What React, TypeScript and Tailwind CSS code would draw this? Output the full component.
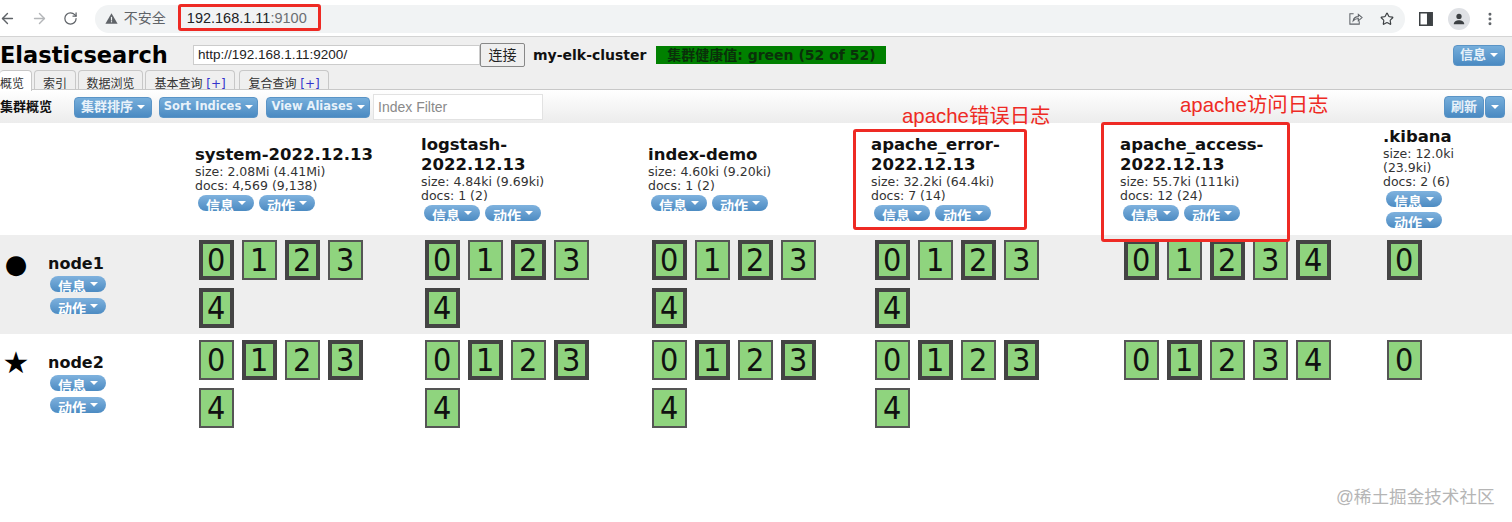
import { ArrowLeft, ArrowRight, RotateCw, Star, MoreVertical } from 'lucide-react';

const indices = [
  { width: 'w-[226px]', shards: 'w-[180px]', name: 'system-2022.12.13', size: 'size: 2.08Mi (4.41Mi)', docs: 'docs: 4,569 (9,138)', pad: 'pt-[22px]' },
  { width: 'w-[227px]', shards: 'w-[180px]', name: 'logstash-2022.12.13', size: 'size: 4.84ki (9.69ki)', docs: 'docs: 1 (2)', pad: 'pt-[12px]' },
  { width: 'w-[223px]', shards: 'w-[180px]', name: 'index-demo', size: 'size: 4.60ki (9.20ki)', docs: 'docs: 1 (2)', pad: 'pt-[22px]' },
  { width: 'w-[249px]', shards: 'w-[180px]', name: 'apache_error-2022.12.13', size: 'size: 32.2ki (64.4ki)', docs: 'docs: 7 (14)', pad: 'pt-[12px]' },
  { width: 'w-[263px]', shards: 'w-[220px]', name: 'apache_access-2022.12.13', size: 'size: 55.7ki (111ki)', docs: 'docs: 12 (24)', pad: 'pt-[12px]' },
  { width: 'w-[129px]', shards: 'w-[120px]', name: '.kibana', size: 'size: 12.0ki (23.9ki)', docs: 'docs: 2 (6)', pad: 'pt-[4px]' },
];

// which shards carry the thick (primary) border, per node and index
const node1Primary = [[0, 2, 4], [0, 2, 4], [0, 2, 4], [0, 2, 4], [0, 2, 4], [0]];
const node2Primary = [[1, 3], [1, 3], [1, 3], [1, 3], [1], []];
const shardCounts = [5, 5, 5, 5, 5, 1];

function Caret() {
  return <span className="ml-1 inline-block border-x-[4px] border-t-[4px] border-x-transparent border-t-white" />;
}

function Pill({ label, stacked }: { label: string; stacked?: boolean }) {
  return (
    <div className={`flex h-4 w-[56px] items-center justify-center overflow-hidden rounded-full bg-gradient-to-b from-[#7fb2de] to-[#4c8bc2] text-[14px] font-bold text-white ${stacked ? 'mb-[6px]' : ''}`}>
      <span className="translate-y-[3px]">{label}</span>
      <Caret />
    </div>
  );
}

function ToolButton({ label, width, text }: { label: string; width: string; text: string }) {
  return (
    <div className={`flex h-[21px] items-center justify-center whitespace-nowrap rounded-sm border border-[#5a94c6] bg-gradient-to-b from-[#76aedb] to-[#4a8ac2] font-bold text-[#e8f2fa] ${text} ${width}`}>
      <span>{label}</span>
      <Caret />
    </div>
  );
}

function Shard({ n, primary }: { n: number; primary: boolean }) {
  return (
    <div className={`mb-2 mr-2 flex h-10 w-[35px] items-center justify-center bg-[#8fd47e] text-[32px] leading-none text-[#111] ${primary ? 'border-4 border-[#444]' : 'border-2 border-[#555]'}`}>
      <span className="scale-x-90">{n}</span>
    </div>
  );
}

function NodeRow({ name, icon, iconSize, primary, bg, shardPad }: { name: string; icon: string; iconSize: string; primary: number[][]; bg: string; shardPad: string }) {
  return (
    <div className={`flex h-[99px] ${bg}`}>
      <div className="flex w-[195px] shrink-0">
        <div className={`flex w-[48px] justify-center pr-[16px] pt-[14px] leading-[30px] text-black ${iconSize}`}>{icon}</div>
        <div className="pt-[20px]">
          <div className="text-[16px] leading-[18px] font-bold text-[#111]">{name}</div>
          <div className="ml-[2px] mt-[3px]">
            <Pill label="信息" stacked />
            <Pill label="动作" />
          </div>
        </div>
      </div>
      {indices.map((ix, i) => (
        <div key={ix.name} className={`${ix.width} shrink-0 pl-1 ${shardPad}`}>
          <div className={`flex flex-wrap ${ix.shards}`}>
            {Array.from({ length: shardCounts[i] }, (_, n) => (
              <Shard key={n} n={n} primary={primary[i].includes(n)} />
            ))}
          </div>
        </div>
      ))}
    </div>
  );
}

export default function App() {
  return (
    <div className="relative h-[522px] w-[1512px] overflow-hidden bg-white font-['DejaVu_Sans','Noto_Sans_CJK_SC',sans-serif] text-[#222]">
      {/* browser chrome */}
      <div className="flex h-[37px] items-center border-b border-[#d4d4d4] bg-white pl-0 pr-[14px] pt-[1px]">
        <ArrowLeft className="ml-[-1px] h-[17px] w-[17px] text-[#5f6368]" />
        <ArrowRight className="ml-[15px] h-[17px] w-[17px] text-[#b4b6b9]" />
        <RotateCw className="ml-[15px] h-[15px] w-[15px] text-[#5f6368]" />
        <div className="ml-[17px] flex h-[28px] w-[1315px] items-center justify-between rounded-full bg-[#f1f3f4] pl-[10px] pr-[11px] font-['Liberation_Sans','Noto_Sans_CJK_SC',sans-serif]">
          <div className="flex items-center text-[14px] text-[#5f6368]">
            <svg viewBox="0 0 16 16" className="h-[13px] w-[13px]" fill="#5f6368">
              <path d="M8 1.5 15.5 14.5H.5Z" />
              <rect x="7.3" y="6" width="1.4" height="4.5" fill="#f1f3f4" />
              <rect x="7.3" y="11.3" width="1.4" height="1.4" fill="#f1f3f4" />
            </svg>
            <span className="ml-[6px]">不安全</span>
            <span className="ml-[21px] text-[14.5px] text-[#202124]">192.168.1.11<span className="text-[#6b6e72]">:9100</span></span>
          </div>
          <div className="flex items-center gap-[17px]">
            <svg viewBox="0 0 16 16" className="h-[15px] w-[15px]" fill="none" stroke="#5f6368" strokeWidth="1.1">
              <path d="M6 3H2v11h10v-3M5.5 10.5C6 7.5 8 6 11 6V3.5L15 7l-4 3.5V8c-2.5 0-4 .8-5.5 2.5Z" />
            </svg>
            <Star className="h-[14px] w-[14px] text-[#3c4043]" strokeWidth={2} />
          </div>
        </div>
        <svg viewBox="0 0 14 14" className="ml-[14px] h-[14px] w-[14px]">
          <rect x="0.75" y="0.75" width="12.5" height="12.5" fill="none" stroke="#3c4043" strokeWidth="1.5" />
          <rect x="8" y="1" width="5" height="12" fill="#3c4043" />
        </svg>
        <div className="ml-[15px] flex h-[22px] w-[22px] items-center justify-center rounded-full bg-[#dfe1e5]">
          <svg viewBox="0 0 16 16" className="h-[14px] w-[14px]" fill="#3c4043">
            <circle cx="8" cy="5" r="3" />
            <path d="M2 14c0-3 3-4.5 6-4.5s6 1.500 6 4.500Z" />
          </svg>
        </div>
        <MoreVertical className="ml-[12px] h-[16px] w-[16px] text-[#5f6368]" strokeWidth={2.500} />
      </div>

      {/* head app header */}
      <div className="h-[53px] border-b border-[#c8c8c8] bg-[#efefef]">
        <div className="flex h-[32px] items-center pt-[4px]">
          <div className="w-[193px] shrink-0 text-[22.5px] font-bold leading-none text-black">Elasticsearch</div>
          <div className="flex h-[20px] w-[287px] items-center border border-[#ccc] bg-white pl-1 font-['Liberation_Sans',sans-serif] text-[13.5px] text-[#222]">http://192.168.1.11:9200/</div>
          <div className="flex h-[24px] w-[45px] items-center justify-center rounded-[2px] border border-[#888] bg-[#efefef] text-[14px]">连接</div>
          <div className="ml-2 text-[14px] font-bold text-[#111]">my-elk-cluster</div>
          <div className="ml-[10px] flex h-[18px] w-[230px] items-center justify-center bg-[#008000] text-[14px] font-bold text-[#0a300a]">集群健康值: green (52 of 52)</div>
          <div className="ml-auto mr-[7px] flex h-[21px] w-[52px] items-center justify-center rounded-sm border border-[#5a94c6] bg-gradient-to-b from-[#76aedb] to-[#4a8ac2] text-[13px] font-bold text-[#e8f2fa]">信息<Caret /></div>
        </div>
        <div className="flex h-[21px] items-end gap-[2px] text-[12px] text-[#333]">
          <div className="z-10 flex h-[21px] w-[32px] translate-y-[1px] items-center justify-end rounded-t-sm border-r border-t border-[#c8c8c8] bg-white pr-[7px] pt-[6px]">概览</div>
          <div className="flex h-[20px] w-[42px] items-center justify-center rounded-t-sm border border-b-0 border-[#c8c8c8] pt-[6px]">索引</div>
          <div className="flex h-[20px] w-[65px] items-center justify-center rounded-t-sm border border-b-0 border-[#c8c8c8] pt-[6px]">数据浏览</div>
          <div className="flex h-[20px] w-[90px] items-center justify-center rounded-t-sm border border-b-0 border-[#c8c8c8] pt-[6px]">基本查询&nbsp;<span className="text-[#3333cc]">[+]</span></div>
          <div className="ml-[2px] flex h-[20px] w-[90px] items-center justify-center rounded-t-sm border border-b-0 border-[#c8c8c8] pt-[6px]">复合查询&nbsp;<span className="text-[#3333cc]">[+]</span></div>
        </div>
      </div>

      {/* cluster toolbar */}
      <div className="flex h-[33px] items-center bg-gradient-to-b from-white to-[#ececec] pt-[1px]">
        <div className="w-[74px] shrink-0 overflow-hidden text-[13px] font-bold text-[#111]">集群概览</div>
        <ToolButton label="集群排序" width="w-[78px]" text="text-[13px]" />
        <div className="w-[7px]" />
        <ToolButton label="Sort Indices" width="w-[99px]" text="text-[11.5px]" />
        <div className="w-[8px]" />
        <ToolButton label="View Aliases" width="w-[104px]" text="text-[11.5px]" />
        <div className="ml-[3px] flex h-[26px] w-[170px] items-center border border-[#e2e2e2] bg-white pl-1 font-['Liberation_Sans',sans-serif] text-[14px] text-[#8a8a8a]">Index Filter</div>
        <div className="ml-auto flex h-[22px] w-[40px] items-center justify-center rounded-sm border border-[#5a94c6] bg-gradient-to-b from-[#76aedb] to-[#4a8ac2] text-[13px] font-bold text-[#e8f2fa]">刷新</div>
        <div className="mr-[7px] ml-[1px] flex h-[22px] w-[20px] items-center justify-center rounded-sm border border-[#5a94c6] bg-gradient-to-b from-[#76aedb] to-[#4a8ac2]"><span className="inline-block border-x-[4px] border-t-[4px] border-x-transparent border-t-white" /></div>
      </div>

      {/* index headings */}
      <div className="flex h-[112px]">
        <div className="w-[195px] shrink-0" />
        {indices.map((ix) => (
          <div key={ix.name} className={`${ix.width} shrink-0 ${ix.pad}`}>
            <div className={`text-[16.5px] font-bold leading-[20px] text-[#111] ${ix.name === '.kibana' ? '' : 'w-[180px]'}`}>{ix.name}</div>
            <div className={`text-[12.5px] leading-[14px] text-[#333] ${ix.name === '.kibana' ? 'w-[90px]' : ''}`}>{ix.size}</div>
            <div className="text-[12.5px] leading-[14px] text-[#333]">{ix.docs}</div>
            <div className={`ml-[3px] flex gap-[5px] pt-[2px] ${ix.name === '.kibana' ? 'flex-col' : ''}`}>
              <Pill label="信息" />
              <Pill label="动作" />
            </div>
          </div>
        ))}
      </div>

      <NodeRow name="node1" icon="●" iconSize="text-[26px]" primary={node1Primary} bg="bg-[#eeeeee]" shardPad="pt-[5px]" />
      <NodeRow name="node2" icon="★" iconSize="text-[30px]" primary={node2Primary} bg="bg-white" shardPad="pt-[6px]" />

      {/* red annotations on top of the screenshot */}
      <div className="absolute left-[178px] top-[4px] h-[27px] w-[143px] rounded-[3px] border-[3px] border-[#ee2a24]" />
      <div className="absolute left-[853px] top-[129px] h-[101px] w-[174px] rounded-[3px] border-[3px] border-[#ee2a24]" />
      <div className="absolute left-[1101px] top-[122px] h-[120px] w-[189px] rounded-[3px] border-[3px] border-[#ee2a24]" />
      <div className="absolute left-[902px] top-[103px] font-['Liberation_Sans','Noto_Sans_CJK_SC',sans-serif] text-[20.4px] leading-[26px] text-[#ee2a24]">apache错误日志</div>
      <div className="absolute left-[1180px] top-[92px] font-['Liberation_Sans','Noto_Sans_CJK_SC',sans-serif] text-[20.4px] leading-[26px] text-[#ee2a24]">apache访问日志</div>
      <div className="absolute left-[1336px] top-[486px] font-['Liberation_Sans','Noto_Sans_CJK_SC',sans-serif] text-[17.6px] leading-[22px] text-[#b5b5b5]">@稀土掘金技术社区</div>
    </div>
  );
}
